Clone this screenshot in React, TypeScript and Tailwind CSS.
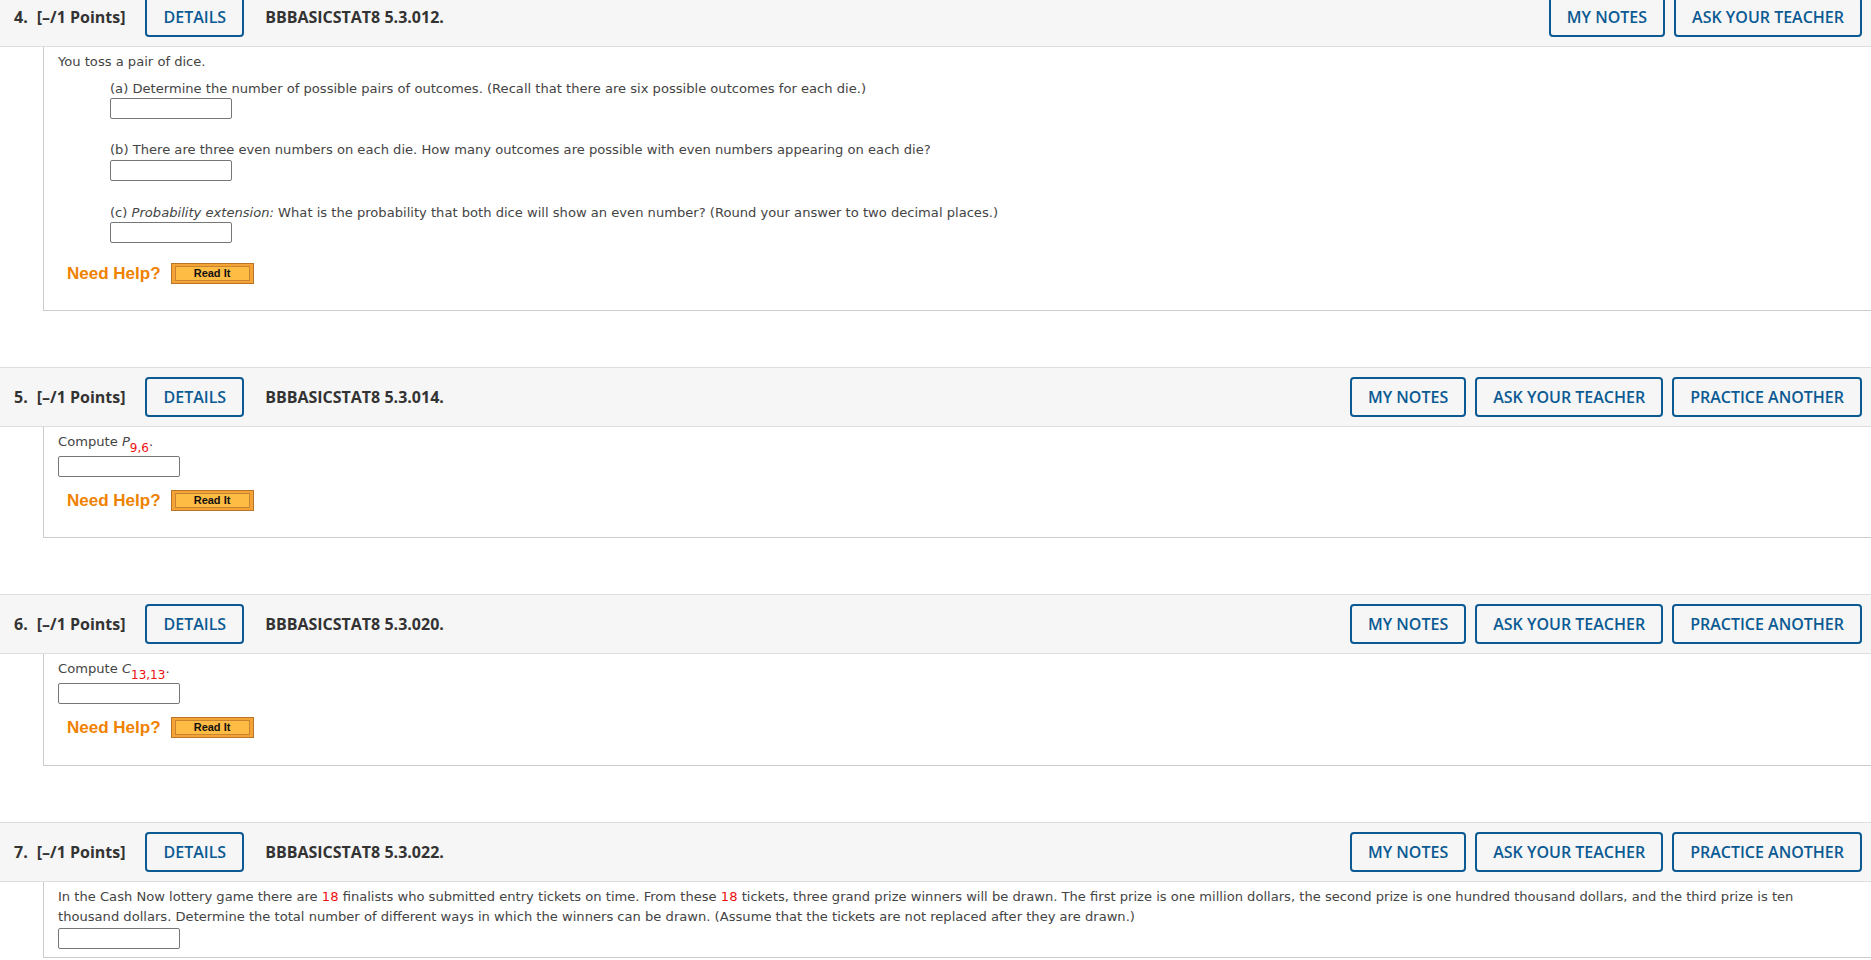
import React from "react";

function Btn({ children, className = "" }: { children: React.ReactNode; className?: string }) {
  return (
    <div
      className={
        "h-[40px] px-[16px] border-2 border-[#0b5a93] rounded-[4px] text-[#0b5a93] font-semibold flex items-center whitespace-nowrap " +
        className
      }
    >
      {children}
    </div>
  );
}

function Header({ num, id, practice }: { num: number; id: string; practice: boolean }) {
  return (
    <div className="h-[60px] bg-[#f6f6f6] border-y border-[#dedede] flex items-center pl-[14px] pr-[9px] font-['Open_Sans',sans-serif] text-[16px] text-[#333333]">
      <span className="font-bold">{num}.</span>
      <span className="font-bold ml-[9px]">[–/1 Points]</span>
      <Btn className="ml-[20px]">DETAILS</Btn>
      <span className="font-bold ml-[21px]">{id}</span>
      <div className="ml-auto flex gap-[9px]">
        <Btn>MY NOTES</Btn>
        <Btn>ASK YOUR TEACHER</Btn>
        {practice && <Btn>PRACTICE ANOTHER</Btn>}
      </div>
    </div>
  );
}

function Input({ className = "" }: { className?: string }) {
  return <div className={"w-[122px] h-[21px] border border-[#767676] rounded-[2px] bg-white " + className} />;
}

function NeedHelp({ className = "" }: { className?: string }) {
  return (
    <div className={"flex items-center h-[21px] pl-[9px] " + className}>
      <span className="font-['Liberation_Sans',Arial,sans-serif] font-bold text-[17px] text-[#ef8200] leading-none">
        Need Help?
      </span>
      <div className="ml-[10px] w-[83px] h-[21px] border border-[#b97428] bg-[#f4a436] px-[3px] py-[2px]">
        <div className="h-full border border-[#c98330] bg-[#ffbc45] flex items-center justify-center font-['Liberation_Sans',Arial,sans-serif] font-bold text-[11px] text-[#111] leading-none">
          Read It
        </div>
      </div>
    </div>
  );
}

function Body({ children, className = "" }: { children: React.ReactNode; className?: string }) {
  return (
    <div
      className={
        "ml-[43px] border-l border-b border-[#cccccc] pl-[14px] font-['DejaVu_Sans',Verdana,sans-serif] text-[13.1px] text-[#444444] " +
        className
      }
    >
      {children}
    </div>
  );
}

function Sub({ children }: { children: React.ReactNode }) {
  return (
    <span className="relative top-[6px] text-[12px] text-[#ee1111] leading-none">{children}</span>
  );
}

export default function App() {
  return (
    <div className="w-[1871px] h-[960px] overflow-hidden bg-white">
      <div className="-mt-[13px]">
        {/* Question 4 */}
        <Header num={4} id="BBBASICSTAT8 5.3.012." practice={false} />
        <Body className="pt-[6px] pb-[26px]">
          <div className="leading-[18px]">You toss a pair of dice.</div>
          <div className="ml-[52px] mt-[9px]">
            <div className="leading-[18px]">
              (a) Determine the number of possible pairs of outcomes. (Recall that there are six possible outcomes for each die.)
            </div>
            <Input />
            <div className="leading-[18px] mt-[22px]">
              (b) There are three even numbers on each die. How many outcomes are possible with even numbers appearing on each die?
            </div>
            <Input className="mt-[1px]" />
            <div className="leading-[18px] mt-[23px]">
              (c) <i>Probability extension:</i> What is the probability that both dice will show an even number? (Round your
              answer to two decimal places.)
            </div>
            <Input />
          </div>
          <NeedHelp className="mt-[20px]" />
        </Body>

        {/* Question 5 */}
        <div className="mt-[56px]">
          <Header num={5} id="BBBASICSTAT8 5.3.014." practice={true} />
          <Body className="pt-[6px] pb-[26px]">
            <div className="h-[23px] leading-[18px] whitespace-nowrap">
              Compute <i>P</i>
              <Sub>9,6</Sub>.
            </div>
            <Input />
            <NeedHelp className="mt-[13px]" />
          </Body>
        </div>

        {/* Question 6 */}
        <div className="mt-[56px]">
          <Header num={6} id="BBBASICSTAT8 5.3.020." practice={true} />
          <Body className="pt-[6px] pb-[27px]">
            <div className="h-[23px] leading-[18px] whitespace-nowrap">
              Compute <i>C</i>
              <Sub>13,13</Sub>.
            </div>
            <Input />
            <NeedHelp className="mt-[13px]" />
          </Body>
        </div>

        {/* Question 7 */}
        <div className="mt-[56px]">
          <Header num={7} id="BBBASICSTAT8 5.3.022." practice={true} />
          <Body className="pt-[5px] pb-[8px]">
            <div className="leading-[20px] whitespace-nowrap">
              In the Cash Now lottery game there are <span className="text-[#ee1111]">18</span> finalists who submitted entry
              tickets on time. From these <span className="text-[#ee1111]">18</span> tickets, three grand prize winners will be
              drawn. The first prize is one million dollars, the second prize is one hundred thousand dollars, and the third
              prize is ten
              <br />
              thousand dollars. Determine the total number of different ways in which the winners can be drawn. (Assume that the
              tickets are not replaced after they are drawn.)
            </div>
            <Input className="mt-[1px]" />
          </Body>
        </div>
      </div>
    </div>
  );
}
